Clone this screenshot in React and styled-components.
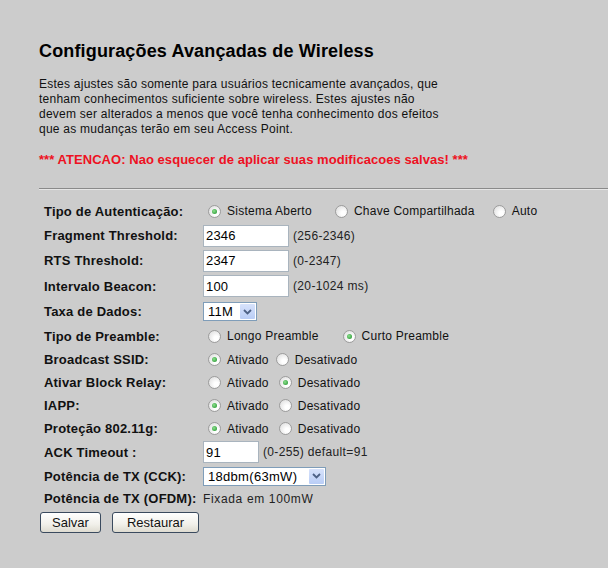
import React from "react";
import styled, { createGlobalStyle } from "styled-components";

const GlobalStyle = createGlobalStyle`
  html, body {
    margin: 0;
    padding: 0;
    background-color: #cccccc;
  }
  body {
    font-family: "Liberation Sans", Arial, sans-serif;
    font-size: 12px;
    color: #111;
  }
`;

function Radio({ checked, label, gap }) {
  return (
    <Option $gap={gap}>
      <RadioCircle>{checked && <RadioDot />}</RadioCircle>
      <OptionText>{label}</OptionText>
    </Option>
  );
}

// gaps: space after each option's text, before the next radio
function RadioGroup({ options, selected, gaps }) {
  return (
    <Options>
      {options.map((opt, i) => (
        <Radio
          key={opt}
          label={opt}
          checked={i === selected}
          gap={gaps[i] || 0}
        />
      ))}
    </Options>
  );
}

function FakeSelect({ value, width }) {
  return (
    <SelectBox $w={width}>
      <SelectText>{value}</SelectText>
      <SelectArrow>
        <svg width="9" height="6" viewBox="0 0 9 6">
          <path
            d="M1 1 L4.5 4.5 L8 1"
            fill="none"
            stroke="#4d6185"
            strokeWidth="1.8"
          />
        </svg>
      </SelectArrow>
    </SelectBox>
  );
}

function App() {
  return (
    <Page>
      <GlobalStyle />
      <Title>Configurações Avançadas de Wireless</Title>
      <Intro>
        Estes ajustes são somente para usuários tecnicamente avançados, que
        <br />
        tenham conhecimentos suficiente sobre wireless. Estes ajustes não
        <br />
        devem ser alterados a menos que você tenha conhecimento dos efeitos
        <br />
        que as mudanças terão em seu Access Point.
      </Intro>
      <Warning>
        *** ATENCAO: Nao esquecer de aplicar suas modificacoes salvas! ***
      </Warning>
      <Divider />

      <Form>
        <Row $h={24}>
          <Label>Tipo de Autenticação:</Label>
          <RadioGroup
            options={["Sistema Aberto", "Chave Compartilhada", "Auto"]}
            selected={0}
            gaps={[23, 18]}
          />
        </Row>
        <Row $h={25}>
          <Label>Fragment Threshold:</Label>
          <Value>
            <TextInput defaultValue="2346" />
            <Hint>(256-2346)</Hint>
          </Value>
        </Row>
        <Row $h={25}>
          <Label>RTS Threshold:</Label>
          <Value>
            <TextInput defaultValue="2347" />
            <Hint>(0-2347)</Hint>
          </Value>
        </Row>
        <Row $h={26}>
          <Label>Intervalo Beacon:</Label>
          <Value>
            <TextInput defaultValue="100" />
            <Hint>(20-1024 ms)</Hint>
          </Value>
        </Row>
        <Row $h={25}>
          <Label>Taxa de Dados:</Label>
          <Value>
            <FakeSelect value="11M" width={54} />
          </Value>
        </Row>
        <Row $h={24}>
          <Label>Tipo de Preamble:</Label>
          <RadioGroup
            options={["Longo Preamble", "Curto Preamble"]}
            selected={1}
            gaps={[24]}
          />
        </Row>
        <Row $h={23}>
          <Label>Broadcast SSID:</Label>
          <RadioGroup options={["Ativado", "Desativado"]} selected={0} gaps={[7]} />
        </Row>
        <Row $h={23}>
          <Label>Ativar Block Relay:</Label>
          <RadioGroup options={["Ativado", "Desativado"]} selected={1} gaps={[10]} />
        </Row>
        <Row $h={23}>
          <Label>IAPP:</Label>
          <RadioGroup options={["Ativado", "Desativado"]} selected={0} gaps={[10]} />
        </Row>
        <Row $h={23}>
          <Label>Proteção 802.11g:</Label>
          <RadioGroup options={["Ativado", "Desativado"]} selected={0} gaps={[10]} />
        </Row>
        <Row $h={24}>
          <Label>ACK Timeout :</Label>
          <Value>
            <TextInput defaultValue="91" $w={56} />
            <Hint>(0-255) default=91</Hint>
          </Value>
        </Row>
        <Row $h={24}>
          <Label>Potência de TX (CCK):</Label>
          <Value>
            <FakeSelect value="18dbm(63mW)" width={123} />
          </Value>
        </Row>
        <Row $h={21}>
          <Label>Potência de TX (OFDM):</Label>
          <Value>
            <Fixed>Fixada em 100mW</Fixed>
          </Value>
        </Row>
      </Form>

      <Buttons>
        <Button $w={61}>Salvar</Button>
        <Button $w={87}>Restaurar</Button>
      </Buttons>
    </Page>
  );
}

const Page = styled.div`
  padding: 41px 0 0 39px;
  min-height: 568px;
  box-sizing: border-box;
`;

const Title = styled.h1`
  margin: 0;
  font-size: 18px;
  font-weight: bold;
  line-height: 21px;
  letter-spacing: 0.15px;
  color: #000;
`;

const Intro = styled.p`
  margin: 15px 0 0;
  line-height: 15px;
  letter-spacing: 0.25px;
  color: #111;
`;

const Warning = styled.p`
  margin: 15px 0 0;
  line-height: 15px;
  font-size: 13px;
  font-weight: bold;
  letter-spacing: 0.05px;
  color: #ee1122;
`;

const Divider = styled.hr`
  margin: 21px 0 9px;
  border: 0;
  border-top: 1px solid #8a8a8a;
  border-bottom: 1px solid #e6e6e6;
  height: 0;
`;

const Form = styled.div`
  display: flex;
  flex-direction: column;
`;

const Row = styled.div`
  display: grid;
  grid-template-columns: 164px 1fr;
  align-items: center;
  height: ${(p) => p.$h}px;
`;

const Label = styled.div`
  padding-left: 5px;
  font-size: 13px;
  font-weight: bold;
  letter-spacing: 0.2px;
  color: #111;
  white-space: nowrap;
`;

const Value = styled.div`
  display: flex;
  align-items: center;
  white-space: nowrap;
`;

const Options = styled.div`
  display: flex;
  align-items: center;
  padding-left: 5px;
  white-space: nowrap;
`;

const Option = styled.label`
  display: flex;
  align-items: center;
  margin-right: ${(p) => p.$gap}px;
`;

const OptionText = styled.span`
  margin-left: 6px;
  letter-spacing: 0.25px;
`;

const RadioCircle = styled.span`
  width: 11px;
  height: 11px;
  border-radius: 50%;
  border: 1px solid #9c9c9c;
  background: radial-gradient(circle at 65% 65%, #ffffff 20%, #d8d8d8 100%);
  display: flex;
  align-items: center;
  justify-content: center;
`;

const RadioDot = styled.span`
  width: 5px;
  height: 5px;
  border-radius: 50%;
  background: radial-gradient(circle at 40% 40%, #8fe08f 0%, #2f9e3a 80%);
`;

const TextInput = styled.input`
  width: ${(p) => p.$w || 86}px;
  height: 22px;
  box-sizing: border-box;
  border: 1px solid #a9b4be;
  background: #fff;
  padding: 0 2px;
  font-family: "Liberation Sans", Arial, sans-serif;
  font-size: 13px;
  letter-spacing: 0.2px;
  color: #000;
  outline: none;
  margin: 0;
`;

const Hint = styled.span`
  margin-left: 4px;
  letter-spacing: 0.35px;
  color: #222;
`;

const Fixed = styled.span`
  letter-spacing: 0.65px;
  color: #222;
`;

const SelectBox = styled.div`
  width: ${(p) => p.$w}px;
  height: 19px;
  box-sizing: border-box;
  border: 1px solid #7f9db9;
  background: #fff;
  display: flex;
  align-items: stretch;
  justify-content: space-between;
`;

const SelectText = styled.span`
  padding-left: 4px;
  font-size: 13px;
  letter-spacing: 0.3px;
  line-height: 17px;
  color: #000;
`;

const SelectArrow = styled.span`
  width: 15px;
  margin: 1px;
  background: linear-gradient(#d7e2fb, #b9cdf6);
  border-radius: 1px;
  display: flex;
  align-items: center;
  justify-content: center;
`;

const Buttons = styled.div`
  display: flex;
  gap: 11px;
  margin-top: 3px;
  padding-left: 1px;
`;

const Button = styled.button`
  width: ${(p) => p.$w}px;
  height: 21px;
  box-sizing: border-box;
  border: 1px solid #3a4a5e;
  border-radius: 3px;
  background: linear-gradient(#ffffff, #f1f0ea 60%, #dedbd0);
  font-family: "Liberation Sans", Arial, sans-serif;
  font-size: 13px;
  color: #111;
  padding: 0;
`;

export default App;
